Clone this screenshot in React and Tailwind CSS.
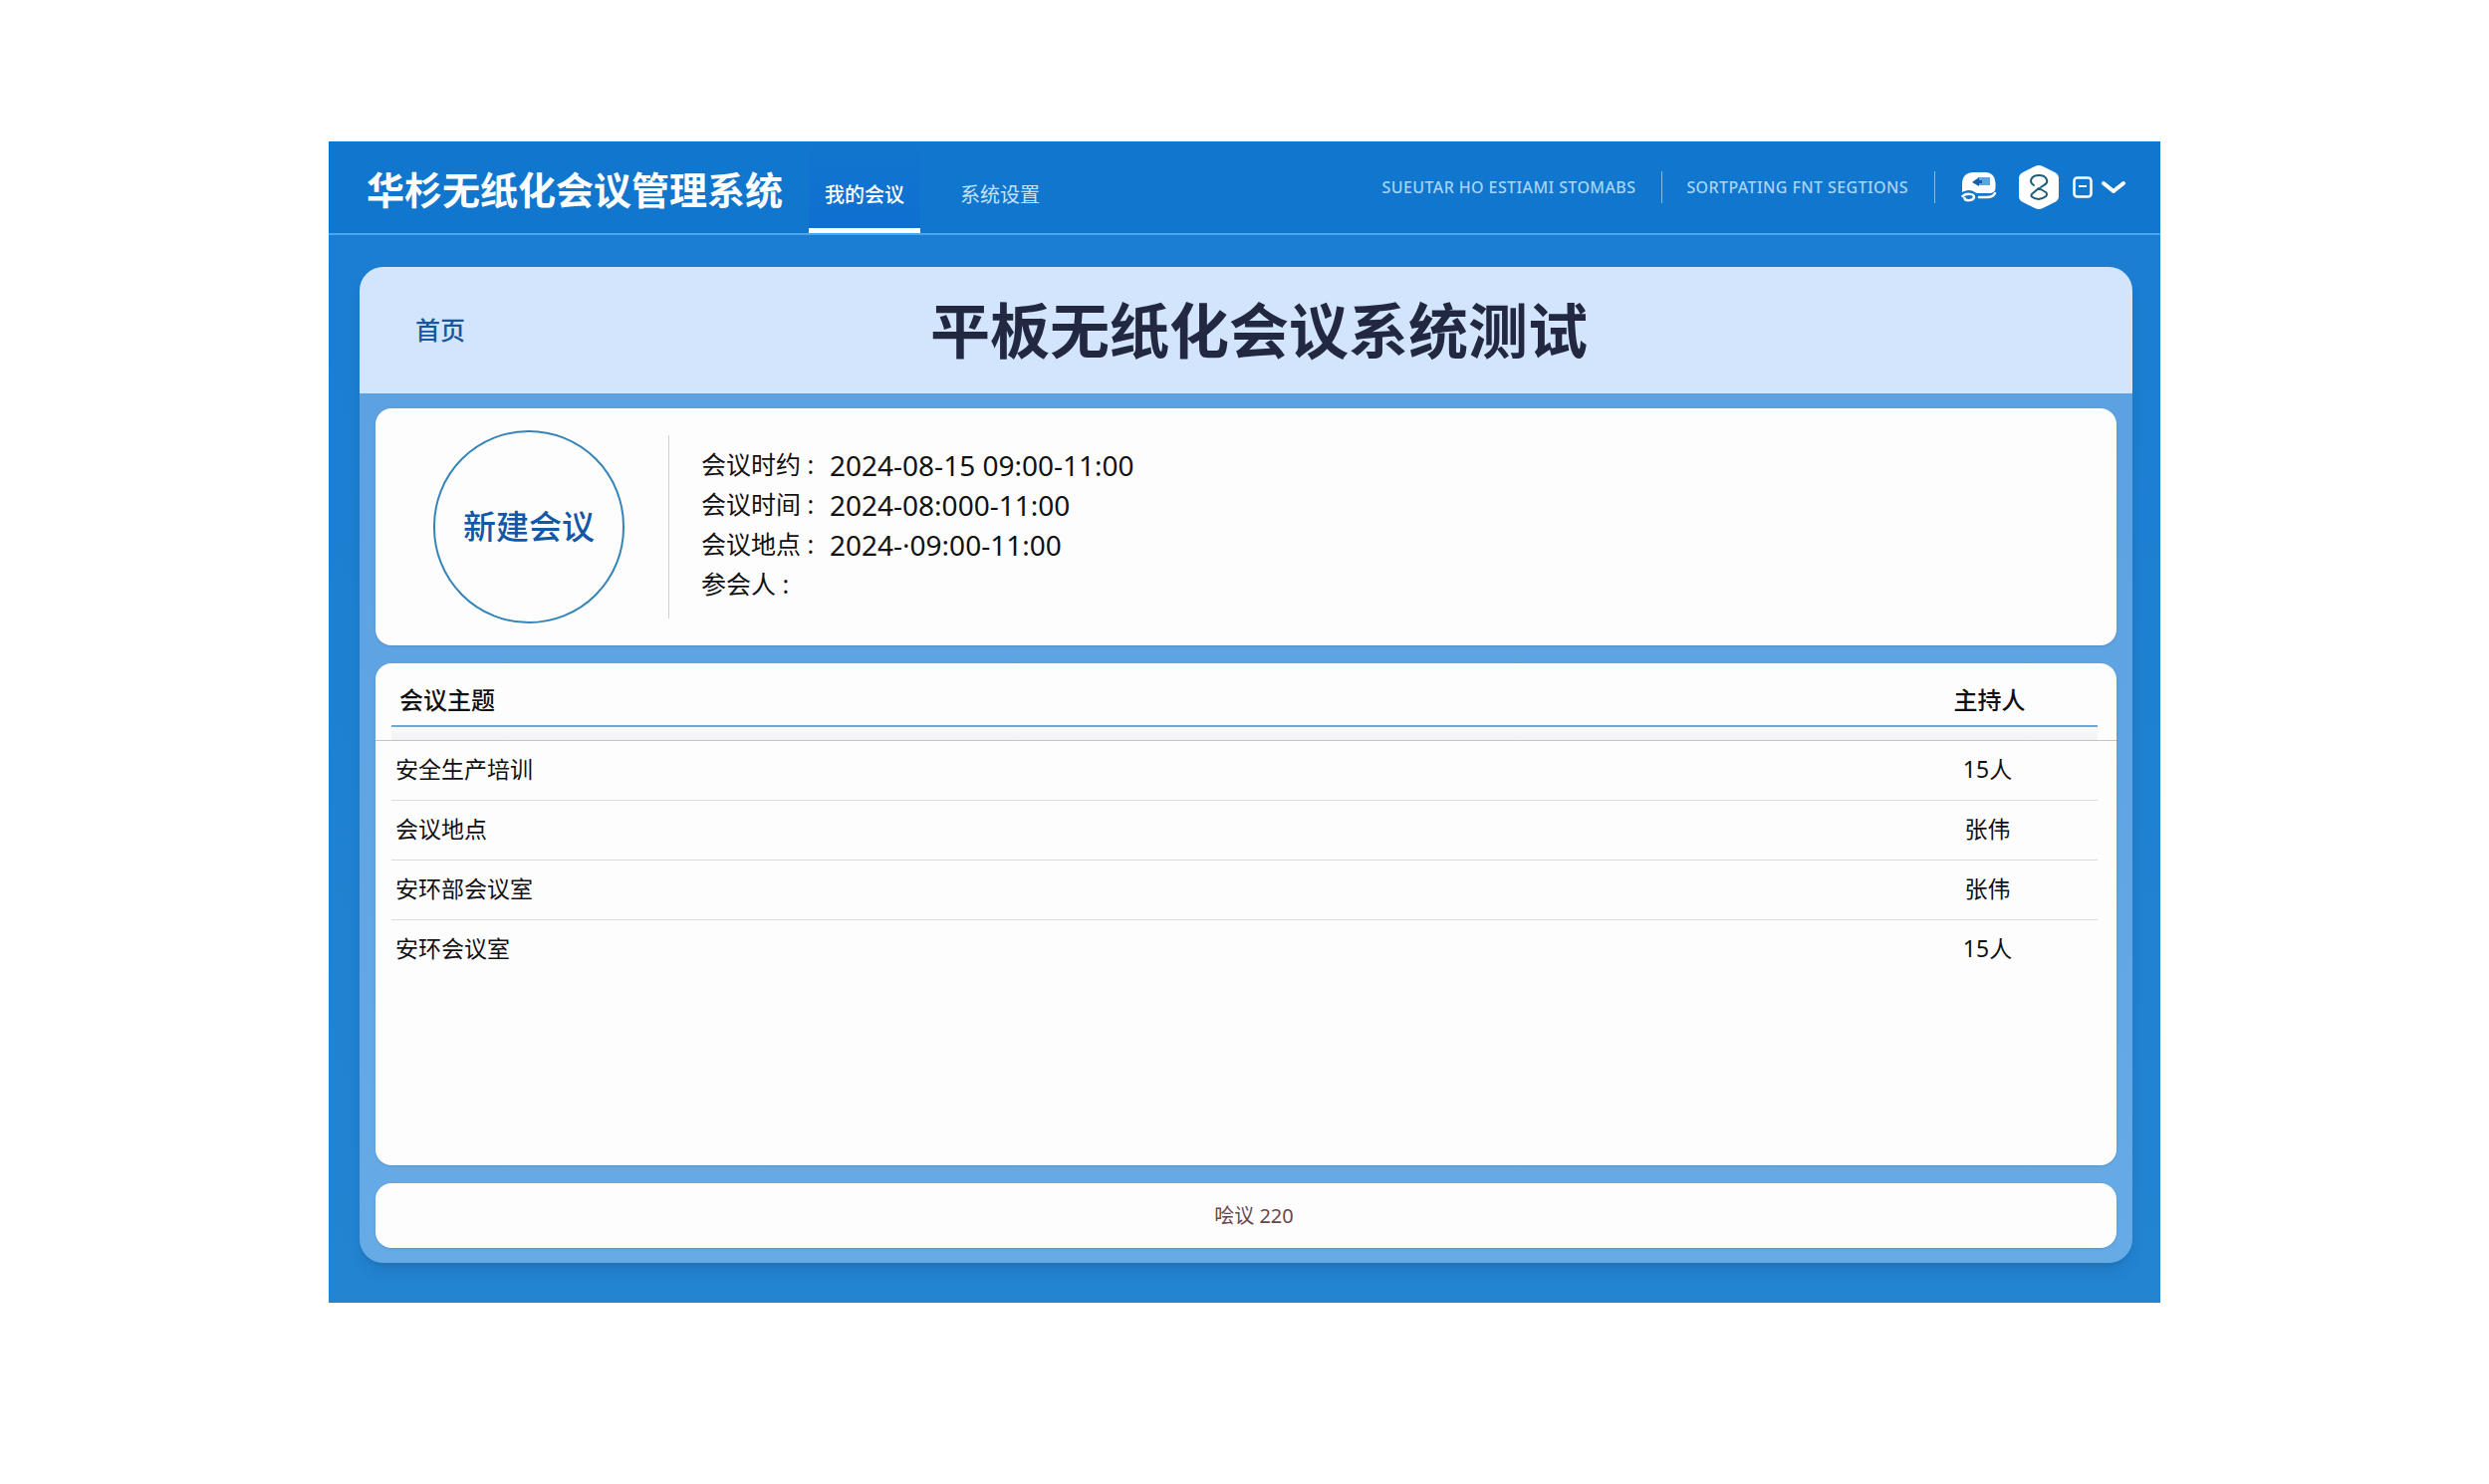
import React, { useState } from "react";

const navItems = [
  { key: "meetings", label: "我的会议" },
  { key: "settings", label: "系统设置" },
];

const meetingInfo = [
  { label: "会议时约 :", value: "2024-08-15 09:00-11:00" },
  { label: "会议时间 :", value: "2024-08:000-11:00" },
  { label: "会议地点 :", value: "2024-·09:00-11:00" },
  { label: "参会人 :", value: "" },
];

const rows = [
  { topic: "安全生产培训", host: "15人" },
  { topic: "会议地点", host: "张伟" },
  { topic: "安环部会议室", host: "张伟" },
  { topic: "安环会议室", host: "15人" },
];

const MessageIcon = () => (
  <svg width="36" height="32" viewBox="0 0 36 32" fill="none">
    <path
      d="M1 21V13C1 5 5 1 13 1H24C31 1 34 5 34.500 12V17C34.500 20 32 22 28 22H17C13 22 13 19 8 19C5 19 3 20 1 21Z"
      fill="#fff"
    />
    <path d="M17 6H29V14H17Z" fill="#5aa5e3" />
    <path d="M11 11L18 6V9H21V12H18V15Z" fill="#155fa8" />
    <path
      d="M1.500 25C5 22 13 22 13 26C12 30 4 30 3.500 27M18 26H26C30 26 33 24 34 22"
      stroke="#fff"
      strokeWidth="2.500"
      strokeLinecap="round"
    />
  </svg>
);

const UserIcon = () => (
  <svg width="40" height="46" viewBox="0 0 40 46" fill="none">
    <path
      d="M16 2Q20 0 24 2L36 8Q40 10 40 14V32Q40 36 36 38L24 44Q20 46 16 44L4 38Q0 36 0 32V14Q0 10 4 8Z"
      fill="#fff"
    />
    <path
      d="M15 21C9 17 13 11 20 11C28 11 31 18 25 21L22 23M20 24L14 29C10 32 14 34 20 35C26 34 30 31 27 28L20 24"
      stroke="#1b5c7c"
      strokeWidth="2"
      strokeLinecap="round"
      strokeLinejoin="round"
    />
  </svg>
);

const Header = () => {
  const [active, setActive] = useState("meetings");

  return (
    <header className="flex h-[94px] items-stretch border-b-2 border-[#4ca6ef] bg-[#1176cd] pr-[34px] pl-[38px]">
      <h1 className="flex items-center pt-1 text-[38px] font-bold whitespace-nowrap text-white">
        华杉无纸化会议管理系统
      </h1>

      <nav className="ml-[26px] flex gap-6">
        {navItems.map((item) => (
          <button
            key={item.key}
            onClick={() => setActive(item.key)}
            className={`w-[112px] border-b-[5px] pt-5 text-[20px] whitespace-nowrap ${
              active === item.key
                ? "border-white bg-linear-to-b from-[#1176cd] to-[#106fd2] font-medium text-white"
                : "border-transparent text-[#c5e2fb]"
            }`}
          >
            {item.label}
          </button>
        ))}
      </nav>

      <div className="ml-auto flex items-center text-white">
        <a href="#" className="text-[16px] font-medium tracking-wide whitespace-nowrap text-[#a5d5fb]">
          SUEUTAR HO ESTIAMI STOMABS
        </a>
        <span className="mr-6 ml-[26px] h-8 w-px bg-[#7dbdf3]"></span>
        <a href="#" className="text-[16px] font-medium tracking-wide whitespace-nowrap text-[#a5d5fb]">
          SORTPATING FNT SEGTIONS
        </a>
        <span className="mx-[26px] h-8 w-px bg-[#7dbdf3]"></span>
        <button aria-label="消息">
          <MessageIcon />
        </button>
        <button aria-label="用户" className="ml-[22px]">
          <UserIcon />
        </button>
        <button aria-label="更多" className="ml-[14px] flex items-center gap-2">
          <svg width="20" height="22" viewBox="0 0 20 22" fill="none" stroke="#fff">
            <rect x="1.500" y="1.500" width="17" height="19" rx="3" strokeWidth="2.500" />
            <path d="M6 10H14" strokeWidth="2" />
          </svg>
          <svg width="26" height="16" viewBox="0 0 26 16" fill="none">
            <path
              d="M3 4L13 12L23 4"
              stroke="#fff"
              strokeWidth="4"
              strokeLinecap="round"
              strokeLinejoin="round"
            />
          </svg>
        </button>
      </div>
    </header>
  );
};

const App = () => {
  return (
    <div className="bg-white px-[330px] pt-[142px] pb-[182px] font-['Noto_Sans','Noto_Sans_CJK_SC',sans-serif]">
      <div className="bg-linear-to-b from-[#1a7dd1] to-[#2384d2]">
        <Header />

        <main className="px-7 pt-8 pb-10 pl-[31px]">
          <div className="overflow-hidden rounded-3xl bg-linear-to-b from-[#5a9fe0] to-[#66abe6] shadow-lg">
            <div className="flex h-[127px] items-center bg-[#d3e5fd] pr-20 pl-14">
              <a href="#" className="text-[25px] font-medium text-[#16579f]">
                首页
              </a>
              <h2 className="flex-1 text-center text-[60px] leading-none font-bold text-[#232841]">
                平板无纸化会议系统测试
              </h2>
            </div>

            <div className="flex flex-col gap-[18px] px-4 py-[15px]">
              <section className="flex h-[238px] items-center rounded-2xl bg-[#fefdfd] pl-[58px] shadow-sm">
                <button className="h-[194px] w-[192px] rounded-full border-2 border-[#3585b8] text-[33px] font-medium text-[#1257a8]">
                  新建会议
                </button>
                <div className="ml-11 h-[184px] w-px bg-[#d0d0d4]"></div>
                <dl className="ml-8 pb-1 text-[#111113]">
                  {meetingInfo.map((item) => (
                    <div key={item.label} className="flex h-10 items-center">
                      <dt className="w-[129px] text-[25px] whitespace-nowrap">{item.label}</dt>
                      <dd className="text-[28px] whitespace-nowrap">{item.value}</dd>
                    </div>
                  ))}
                </dl>
              </section>

              <section className="min-h-[504px] overflow-hidden rounded-2xl bg-[#fefdfd] shadow-sm">
                <table className="w-full border-collapse text-[#111113]">
                  <thead>
                    <tr className="border-b border-[#c4c4c8] text-[24px]">
                      <th className="pl-4 text-left font-medium">
                        <div className="flex h-16 items-center border-b-2 border-[#6fa9d0] pt-3 pl-2">
                          会议主题
                        </div>
                        <div className="h-[13px] bg-linear-to-b from-[#fbfafb] to-[#f2f1f3]"></div>
                      </th>
                      <th className="w-[240px] pr-[19px] font-medium">
                        <div className="flex h-16 items-center justify-center border-b-2 border-[#6fa9d0] pt-3 pl-1">
                          主持人
                        </div>
                        <div className="h-[13px] bg-linear-to-b from-[#fbfafb] to-[#f2f1f3]"></div>
                      </th>
                    </tr>
                  </thead>
                  <tbody>
                    {rows.map((row) => (
                      <tr key={row.topic} className="group text-[23px]">
                        <td className="pl-4">
                          <div className="flex h-[60px] items-center border-b border-[#dcdadd] pb-[2px] pl-1 group-last:border-transparent">
                            {row.topic}
                          </div>
                        </td>
                        <td className="pr-[19px]">
                          <div className="flex h-[60px] items-center justify-center border-b border-[#dcdadd] pb-[2px] group-last:border-transparent">
                            {row.host}
                          </div>
                        </td>
                      </tr>
                    ))}
                  </tbody>
                </table>
              </section>

              <footer className="flex h-[65px] items-center justify-center rounded-2xl bg-[#fefdfd] pl-4 text-[20px] text-[#6a474c] shadow-sm">
                哙议 220
              </footer>
            </div>
          </div>
        </main>
      </div>
    </div>
  );
};

export default App;
